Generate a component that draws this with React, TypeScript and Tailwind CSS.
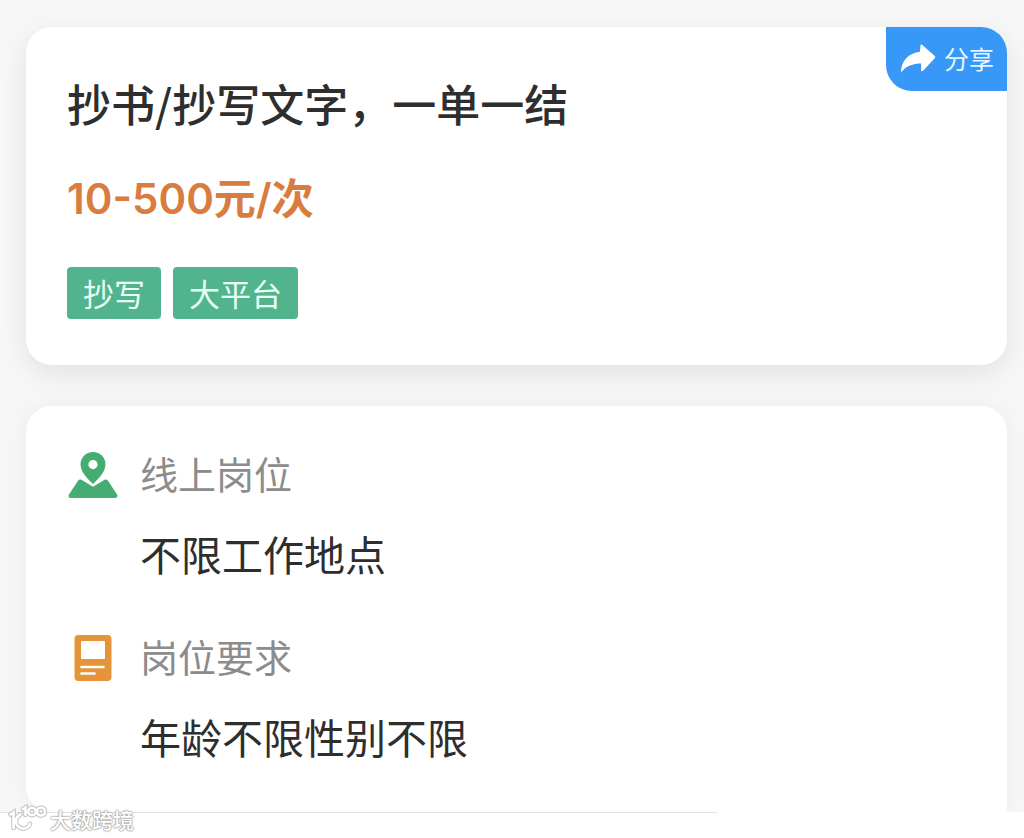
import type { ReactNode } from "react";

interface JobInfo {
  label: string;
  value: string;
  icon: ReactNode;
}

const LocationIcon = () => (
  <svg viewBox="0 0 50 48" className="w-[50px] h-12" aria-hidden="true">
    <path
      d="M14 28.500h-1.500c-1.200 0-2.100.5-2.700 1.500L1 43.500c-1.200 2 0 3.500 2 3.500h44c2 0 3.200-1.500 2-3.500L40.200 30c-.6-1-1.500-1.500-2.700-1.500H37L25 35.800 13 28.500z"
      fill="#45ad72"
    />
    <path
      fillRule="evenodd"
      d="M25 1C18 1 12.500 6.500 12.500 13.300c0 7.700 7 14.700 12.500 19.700 5.500-5 12.500-12 12.500-19.700C37.500 6.500 32 1 25 1zm0 8a4.600 4.600 0 1 1 0 9.200A4.600 4.600 0 0 1 25 9z"
      fill="#45ad72"
    />
  </svg>
);

const RequirementIcon = () => (
  <svg viewBox="0 0 38 48" className="w-[38px] h-12" aria-hidden="true">
    <rect x="0.500" y="1" width="37" height="46" rx="4" fill="#e5943a" />
    <rect x="7" y="7" width="24" height="18" rx="1" fill="#fff" />
    <path d="M7.500 33h22M7.500 39.500h13" stroke="#fff" strokeWidth="2.600" strokeLinecap="round" />
  </svg>
);

const ShareIcon = () => (
  <svg viewBox="0 0 36 30" className="w-9 h-[30px]" aria-hidden="true">
    <path
      d="M20.500 1.500c.2-1 1-1.200 1.800-.5L34.500 11.800c1 .9 1 1.900 0 2.800L23 26.800c-.9.800-1.900.5-1.900-.6v-6.700C13 19.500 6 22 1 28.500 1 17 8.500 9 20 7.800z"
      fill="#fff"
    />
  </svg>
);

const logoPath = "M2.500 10.500L5.500 8.500V24M12.500 10.500a7.300 7.300 0 1 0 9.500 9.500M15 5l2.500-1.500V11";

const WatermarkLogo = () => (
  <svg viewBox="0 0 40 30" className="w-10 h-[30px]" fill="none" aria-hidden="true">
    <g stroke="#c2c2c2" strokeWidth="4.600" strokeLinecap="round">
      <path d={logoPath} />
      <circle cx="24" cy="7.500" r="3.800" />
      <circle cx="33" cy="7.500" r="4" />
    </g>
    <g stroke="#fff" strokeWidth="2.600" strokeLinecap="round">
      <path d={logoPath} />
      <circle cx="24" cy="7.500" r="3.800" />
      <circle cx="33" cy="7.500" r="4" />
    </g>
  </svg>
);

const tags = ["抄写", "大平台"];

const jobInfo: JobInfo[] = [
  { label: "线上岗位", value: "不限工作地点", icon: <LocationIcon /> },
  { label: "岗位要求", value: "年龄不限性别不限", icon: <RequirementIcon /> },
];

const App = () => {
  return (
    <div className="min-h-screen bg-white font-['Noto_Sans_CJK_SC',sans-serif]">
      <main className="flex flex-col gap-[41px] overflow-hidden bg-[#f7f7f7] pt-[27px] pr-[17px] pl-[26px]">
        <section className="relative rounded-[26px] bg-white px-[41px] pt-11 pb-[46px] shadow-[0_8px_28px_rgba(0,0,0,0.09)]">
          <button
            type="button"
            className="absolute top-0 right-0 flex h-16 items-center gap-2 rounded-tr-[26px] rounded-bl-[26px] bg-[#3798f8] pr-[13px] pl-[14px] text-[25px] text-[#e6f6ff]"
          >
            <ShareIcon />
            分享
          </button>
          <h1 className="text-[44px] leading-[64px] font-medium text-[#2e2e2e]">
            抄书/抄写文字，一单一结
          </h1>
          <p className="mt-9 font-[Inter,'Noto_Sans_CJK_SC',sans-serif] text-[42px] leading-[56px] font-semibold text-[#d97c40]">
            10-500元/次
          </p>
          <ul className="mt-10 flex gap-3">
            {tags.map((tag) => (
              <li
                key={tag}
                className="rounded-[4px] bg-[#52b48f] px-4 text-[31px] leading-[52px] text-[#e8fff4]"
              >
                {tag}
              </li>
            ))}
          </ul>
        </section>

        <section className="rounded-t-[26px] rounded-bl-[26px] bg-white px-[42px] pt-[39px] pb-12 shadow-[0_0_24px_rgba(0,0,0,0.05)]">
          <dl className="flex flex-col gap-[47px]">
            {jobInfo.map((info) => (
              <div key={info.label}>
                <dt className="flex items-center text-[38px] leading-[56px] text-[#8c8c8c]">
                  <span className="mt-1 mr-[22px] flex w-[50px] justify-center">{info.icon}</span>
                  {info.label}
                </dt>
                <dd className="mt-6 pl-[72px] text-[41px] leading-[56px] text-[#2e2e2e]">
                  {info.value}
                </dd>
              </div>
            ))}
          </dl>
        </section>
      </main>

      <footer className="relative h-6">
        <div className="w-[70%] border-t border-[#e2e2e2]" />
        <div className="absolute -top-2 left-2 flex items-center gap-0.5 text-[21px] leading-[30px] font-medium text-white">
          <WatermarkLogo />
          <span className="[text-shadow:0_0_2px_#999,0_0_2px_#999,0_0_1px_#999]">大数跨境</span>
        </div>
      </footer>
    </div>
  );
};

export default App;
